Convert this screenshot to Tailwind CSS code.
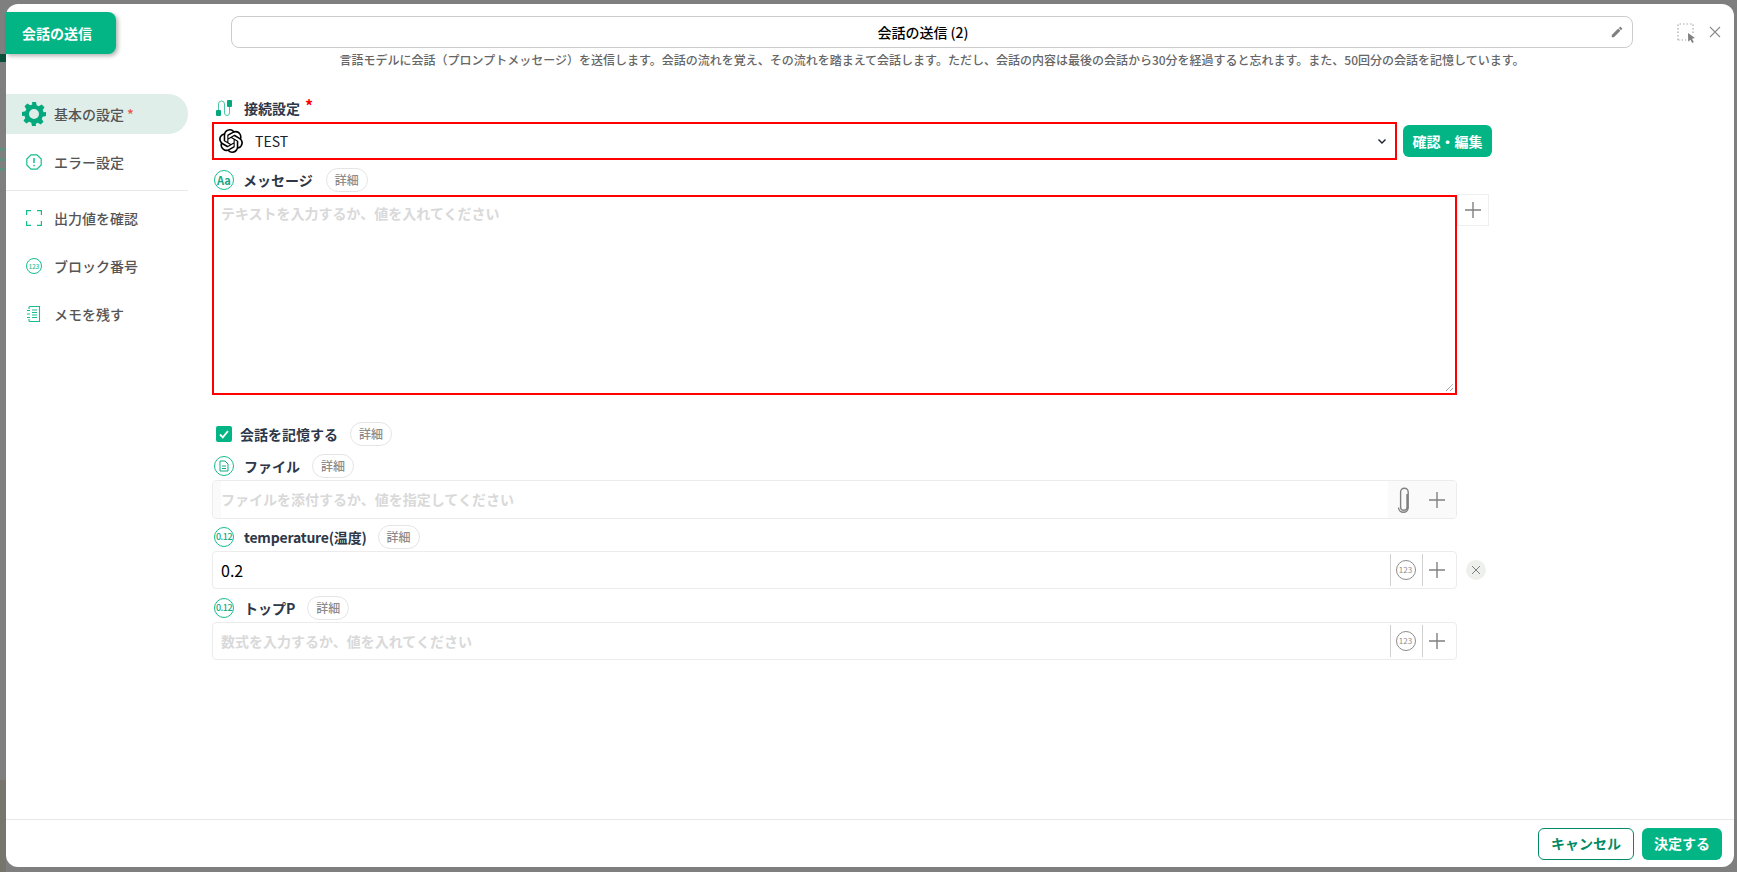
<!DOCTYPE html>
<html lang="ja">
<head>
  <meta charset="UTF-8" />
  <title>会話の送信</title>
  <script src="https://cdn.jsdelivr.net/npm/@tailwindcss/browser@4"></script>
</head>
<body class="relative w-[1737px] h-[872px] overflow-hidden bg-[#7f7f7f] font-['Noto_Sans_CJK_JP',sans-serif]">

  <!-- 背景の切れ端 -->
  <div class="absolute left-0 top-[54px] w-[6px] h-[8px] bg-[#0b4f3d]"></div>
  <div class="absolute left-0 top-[148px] w-[6px] h-[3px] bg-[#5f8f80]"></div>
  <div class="absolute left-0 top-[158px] w-[6px] h-[3px] bg-[#5f8f80]"></div>
  <div class="absolute left-0 top-[168px] w-[6px] h-[3px] bg-[#5f8f80]"></div>
  <div class="absolute left-0 top-[780px] w-[6px] h-[92px] bg-[#78756d]"></div>

  <!-- モーダル -->
  <div class="absolute left-[6px] top-[4px] w-[1728px] h-[863px] flex flex-col rounded-xl bg-white">

    <!-- ヘッダー -->
    <header class="flex h-[90px] shrink-0">
      <div class="mt-[8px] w-[110px] h-[42px] flex items-center justify-center pr-[8px] rounded-r-lg bg-[#03b585] text-white text-[14px] font-bold shadow-[2px_2px_4px_rgba(0,0,0,0.3)]">会話の送信</div>
      <div class="ml-[115px] mt-[12px] w-[1402px]">
        <div class="relative h-[32px] flex items-center justify-center pr-[18px] rounded-lg border border-[#cccccc] text-[14px] font-medium text-black">
          会話の送信 (2)
          <svg class="absolute right-[8px] top-[8px] w-[14px] h-[14px]" viewBox="0 0 24 24" fill="#808080"><path d="M3 17.25V21h3.75L17.81 9.94l-3.75-3.75L3 17.25zM20.71 7.04a1 1 0 0 0 0-1.41l-2.34-2.34a1 1 0 0 0-1.41 0l-1.83 1.83 3.75 3.75 1.83-1.83z"/></svg>
        </div>
        <p class="mt-[2px] text-center text-[12px] leading-[20px] text-[#666666] font-medium whitespace-nowrap">言語モデルに会話（プロンプトメッセージ）を送信します。会話の流れを覚え、その流れを踏まえて会話します。ただし、会話の内容は最後の会話から30分を経過すると忘れます。また、50回分の会話を記憶しています。</p>
      </div>
      <div class="ml-[44px] mt-[19px] flex gap-[12px] h-[20px]">
        <svg class="w-[20px] h-[20px]" viewBox="0 0 20 20" fill="none">
          <path d="M1 17V1h15v9" stroke="#a8a8a8" stroke-width="1.2" stroke-dasharray="1.5 2"/>
          <path d="M1 17h8" stroke="#a8a8a8" stroke-width="1.2" stroke-dasharray="1.5 2"/>
          <path d="M11 10l7 5-3 .8 1.8 3.2-1.6.9-1.8-3.2-2.2 2z" fill="#808080"/>
        </svg>
        <svg class="w-[12px] h-[12px] mt-[3px]" viewBox="0 0 12 12" fill="none" stroke="#8a8a8a" stroke-width="1.1"><path d="M1 1l10 10M11 1L1 11"/></svg>
      </div>
    </header>

    <div class="flex flex-1 min-h-0">
      <!-- サイドバー -->
      <aside class="w-[182px] shrink-0 text-[14px] font-medium text-[#555555]">
        <div class="h-[40px] flex items-center rounded-r-full bg-[#dfeee8] pl-[16px]">
          <svg class="w-[24px] h-[24px]" viewBox="0 0 24 24" fill="#03a97c"><path fill-rule="evenodd" d="M10 0h4l.7 3.3 2.1.9 2.9-1.8 2.8 2.8-1.8 2.9.9 2.1L24 10v4l-3.4.8-.9 2.1 1.8 2.9-2.8 2.8-2.9-1.8-2.1.9L14 24h-4l-.7-3.3-2.1-.9-2.9 1.8-2.8-2.8 1.8-2.9-.9-2.1L0 14v-4l3.4-.7.9-2.1-1.8-2.9 2.8-2.8 2.9 1.8 2.1-.9zM12 7a5 5 0 1 0 0 10 5 5 0 0 0 0-10z"/></svg>
          <span class="ml-[8px]">基本の設定</span><span class="ml-[3px] text-[#e8574e]">*</span>
        </div>
        <div class="mt-[8px] h-[40px] flex items-center pl-[20px]">
          <svg class="w-[16px] h-[16px]" viewBox="0 0 16 16" fill="none" stroke="#14bd90" stroke-width="1.2"><path d="M5 .8h6L15.2 5v6L11 15.2H5L.8 11V5z"/><path d="M8 4v5M8 10.8v1.4" stroke-width="1.5"/></svg>
          <span class="ml-[12px]">エラー設定</span>
        </div>
        <div class="mt-[8px] border-t border-[#e8e8e8]"></div>
        <div class="mt-[3px] h-[48px] flex items-center pl-[20px]">
          <svg class="w-[16px] h-[16px]" viewBox="0 0 16 16" fill="none" stroke="#14bd90" stroke-width="1.2"><path d="M.6 5V.6H5M11 .6h4.4V5M15.4 11v4.4H11M5 15.4H.6V11"/></svg>
          <span class="ml-[12px]">出力値を確認</span>
        </div>
        <div class="h-[48px] flex items-center pl-[20px]">
          <span class="w-[16px] h-[16px] flex items-center justify-center rounded-full border border-[#14bd90] text-[6px] font-medium text-[#14bd90]">123</span>
          <span class="ml-[12px]">ブロック番号</span>
        </div>
        <div class="h-[48px] flex items-center pl-[20px]">
          <svg class="w-[16px] h-[16px]" viewBox="0 0 16 16" fill="none" stroke="#14bd90" stroke-width="1.1"><path d="M3 3V1.5a1 1 0 0 1 1-1h9.5v15H4a1 1 0 0 1-1-1V13"/><path d="M6 4h5M6 6.5h5M6 9h5M6 11.5h5M1 4.5h3M1 8h3M1 11.5h3"/></svg>
          <span class="ml-[12px]">メモを残す</span>
        </div>
      </aside>

      <!-- フォーム -->
      <main class="pl-[24px] text-[14px]">
        <!-- 接続設定 -->
        <div class="mt-[2px] h-[24px] flex items-center text-[#2d3748] font-bold">
          <svg class="ml-[4px] w-[16px] h-[16px]" viewBox="0 0 16 16" fill="none">
            <path d="M2.5 10V4a3 3 0 0 1 6 0v9a2.5 2.5 0 0 0 5 0V7" stroke="#4bc8a5" stroke-width="1"/>
            <rect x="0" y="10" width="5" height="6" rx="1" fill="#03a97c"/><rect x="11" y="0" width="5" height="7" rx="1" fill="#03a97c"/>
          </svg>
          <span class="ml-[12px]">接続設定</span><span class="ml-[5px] -mt-[6px] text-[#ff0000] text-[16px] leading-none">*</span>
        </div>
        <div class="mt-[2px] flex items-center">
          <div class="w-[1185px] h-[38px] flex items-center border-2 border-[#ff0000] px-[5px]">
            <svg class="w-[24px] h-[24px]" viewBox="0 0 24 24" fill="#000000"><path d="M22.2819 9.8211a5.9847 5.9847 0 0 0-.5157-4.9108 6.0462 6.0462 0 0 0-6.5098-2.9A6.0651 6.0651 0 0 0 4.9807 4.1818a5.9847 5.9847 0 0 0-3.9977 2.9 6.0462 6.0462 0 0 0 .7427 7.0966 5.98 5.98 0 0 0 .511 4.9107 6.051 6.051 0 0 0 6.5146 2.9001A5.9847 5.9847 0 0 0 13.2599 24a6.0557 6.0557 0 0 0 5.7718-4.2058 5.9894 5.9894 0 0 0 3.9977-2.9001 6.0557 6.0557 0 0 0-.7475-7.0729zm-9.022 12.6081a4.4755 4.4755 0 0 1-2.8764-1.0408l.1419-.0804 4.7783-2.7582a.7948.7948 0 0 0 .3927-.6813v-6.7369l2.02 1.1686a.071.071 0 0 1 .038.052v5.5826a4.504 4.504 0 0 1-4.4945 4.4944zm-9.6607-4.1254a4.4708 4.4708 0 0 1-.5346-3.0137l.142.0852 4.783 2.7582a.7712.7712 0 0 0 .7806 0l5.8428-3.3685v2.3324a.0804.0804 0 0 1-.0332.0615L9.74 19.9502a4.4992 4.4992 0 0 1-6.1408-1.6464zM2.3408 7.8956a4.485 4.485 0 0 1 2.3655-1.9728V11.6a.7664.7664 0 0 0 .3879.6765l5.8144 3.3543-2.0201 1.1685a.0757.0757 0 0 1-.071 0l-4.8303-2.7865A4.504 4.504 0 0 1 2.3408 7.872zm16.5963 3.8558L13.1038 8.364 15.1192 7.2a.0757.0757 0 0 1 .071 0l4.8303 2.7913a4.4944 4.4944 0 0 1-.6765 8.1042v-5.6772a.79.79 0 0 0-.407-.667zm2.0107-3.0231l-.142-.0852-4.7735-2.7818a.7759.7759 0 0 0-.7854 0L9.409 9.2297V6.8974a.0662.0662 0 0 1 .0284-.0615l4.8303-2.7866a4.4992 4.4992 0 0 1 6.6802 4.66zM8.3065 12.863l-2.02-1.1638a.0804.0804 0 0 1-.038-.0567V6.0742a4.4992 4.4992 0 0 1 7.3757-3.4537l-.142.0805L8.704 5.459a.7948.7948 0 0 0-.3927.6813zm1.0976-2.3654l2.602-1.4998 2.6069 1.4998v2.9994l-2.5974 1.4997-2.6067-1.4997Z"/></svg>
            <span class="ml-[12px] text-[#1a202c]">TEST</span>
            <svg class="ml-auto mr-[3px] w-[10px] h-[10px]" viewBox="0 0 10 10" fill="none" stroke="#1a202c" stroke-width="1.4"><path d="M1.5 3.5L5 7l3.5-3.5"/></svg>
          </div>
          <div class="ml-[6px] w-[89px] h-[32px] flex items-center justify-center rounded-md bg-[#03b585] text-white text-[14px] font-bold whitespace-nowrap">確認・編集</div>
        </div>

        <!-- メッセージ -->
        <div class="mt-[8px] h-[24px] flex items-center text-[#2d3748] font-bold">
          <span class="ml-[2px] w-[20px] h-[20px] flex items-center justify-center rounded-full border-[1.5px] border-[#14bd90] text-[11px] font-bold text-[#14a884]">Aa</span>
          <span class="ml-[9px]">メッセージ</span>
          <span class="ml-[13px] w-[42px] h-[24px] flex items-center justify-center rounded-full border border-[#e5e5e5] text-[12px] font-medium text-[#8c8c8c]">詳細</span>
        </div>
        <div class="mt-[3px] flex items-start">
          <div class="relative w-[1245px] h-[200px] border-2 border-[#ff0000] pl-[7px] pt-[6px] text-[#d9d9d9] font-bold">
            テキストを入力するか、値を入れてください
            <svg class="absolute right-[1px] bottom-[1px] w-[9px] h-[9px]" viewBox="0 0 9 9" fill="none" stroke="#777777" stroke-width="1" stroke-dasharray="1 0.6"><path d="M1 8l7-7M5 8l3-3"/></svg>
          </div>
          <div class="-mt-[1px] w-[32px] h-[32px] flex items-center justify-center border border-[#efefef]">
            <svg class="w-[16px] h-[16px]" viewBox="0 0 16 16" stroke="#808080" stroke-width="1.4"><path d="M8 0v16M0 8h16"/></svg>
          </div>
        </div>

        <!-- 会話を記憶する -->
        <div class="mt-[27px] h-[24px] flex items-center text-[#2d3748] font-bold">
          <span class="ml-[4px] w-[16px] h-[16px] flex items-center justify-center rounded-[2px] bg-[#03b585]">
            <svg class="w-[12px] h-[12px]" viewBox="0 0 12 12" fill="none" stroke="#ffffff" stroke-width="1.8"><path d="M2 6.5l2.8 2.8L10 3"/></svg>
          </span>
          <span class="ml-[8px]">会話を記憶する</span>
          <span class="ml-[12px] w-[42px] h-[24px] flex items-center justify-center rounded-full border border-[#e5e5e5] text-[12px] font-medium text-[#8c8c8c]">詳細</span>
        </div>

        <!-- ファイル -->
        <div class="mt-[8px] h-[24px] flex items-center text-[#2d3748] font-bold">
          <span class="ml-[2px] w-[20px] h-[20px] flex items-center justify-center rounded-full border-[1.5px] border-[#14bd90]">
            <svg class="w-[12px] h-[12px]" viewBox="0 0 12 12" fill="none" stroke="#14a884" stroke-width="1"><path d="M2 1h5l3 3v7H2zM4 6h4M4 8.5h4"/></svg>
          </span>
          <span class="ml-[10px]">ファイル</span>
          <span class="ml-[12px] w-[42px] h-[24px] flex items-center justify-center rounded-full border border-[#e5e5e5] text-[12px] font-medium text-[#8c8c8c]">詳細</span>
        </div>
        <div class="mt-[2px] w-[1245px] h-[39px] flex items-stretch rounded-[4px] border border-[#ececec] overflow-hidden">
          <span class="w-[8px] bg-[#fafafa]"></span>
          <span class="flex-1 self-center text-[#d9d9d9] font-bold">ファイルを添付するか、値を指定してください</span>
          <div class="w-[68px] flex items-center bg-[#fafafa]">
            <svg class="ml-[9px] w-[14px] h-[26px]" viewBox="0 0 14 26" fill="none" stroke="#808080" stroke-width="1.4"><path d="M10 7v13a3.2 3.2 0 0 1-6.4 0V5a3.6 3.6 0 0 1 7.6 0v15.5a4.4 4.4 0 0 1-9.6 0"/></svg>
            <svg class="ml-[18px] w-[16px] h-[16px]" viewBox="0 0 16 16" stroke="#808080" stroke-width="1.4"><path d="M8 0v16M0 8h16"/></svg>
          </div>
        </div>

        <!-- temperature -->
        <div class="mt-[6px] h-[24px] flex items-center text-[#2d3748] font-bold">
          <span class="ml-[2px] w-[20px] h-[20px] flex items-center justify-center rounded-full border-[1.5px] border-[#14bd90] text-[9px] tracking-[-0.5px] font-medium text-[#14a884]">0.12</span>
          <span class="ml-[10px] tracking-[-0.2px]">temperature(温度)</span>
          <span class="ml-[11px] w-[42px] h-[24px] flex items-center justify-center rounded-full border border-[#e5e5e5] text-[12px] font-medium text-[#8c8c8c]">詳細</span>
        </div>
        <div class="mt-[2px] flex items-center">
          <div class="w-[1245px] h-[38px] flex items-center rounded-[4px] border border-[#ececec]">
            <span class="flex-1 pl-[8px] text-[16px] text-black">0.2</span>
            <div class="h-[32px] w-[32px] flex items-center justify-center pr-[2px] border-l border-[#d0d0d0]">
              <span class="w-[20px] h-[20px] flex items-center justify-center rounded-full border border-[#8c8c8c] text-[8px] text-[#8c8c8c]">123</span>
            </div>
            <div class="h-[32px] w-[34px] flex items-center justify-center pr-[5px] border-l border-[#d0d0d0]">
              <svg class="w-[16px] h-[16px]" viewBox="0 0 16 16" stroke="#808080" stroke-width="1.4"><path d="M8 0v16M0 8h16"/></svg>
            </div>
          </div>
          <span class="ml-[9px] w-[20px] h-[20px] flex items-center justify-center rounded-full bg-[#eef0ec]">
            <svg class="w-[10px] h-[10px]" viewBox="0 0 10 10" stroke="#808080" stroke-width="1"><path d="M1 1l8 8M9 1L1 9"/></svg>
          </span>
        </div>

        <!-- トップP -->
        <div class="mt-[7px] h-[24px] flex items-center text-[#2d3748] font-bold">
          <span class="ml-[2px] w-[20px] h-[20px] flex items-center justify-center rounded-full border-[1.5px] border-[#14bd90] text-[9px] tracking-[-0.5px] font-medium text-[#14a884]">0.12</span>
          <span class="ml-[10px]">トップP</span>
          <span class="ml-[12px] w-[42px] h-[24px] flex items-center justify-center rounded-full border border-[#e5e5e5] text-[12px] font-medium text-[#8c8c8c]">詳細</span>
        </div>
        <div class="mt-[2px] w-[1245px] h-[38px] flex items-center rounded-[4px] border border-[#ececec]">
          <span class="flex-1 pl-[8px] text-[#d9d9d9] font-bold">数式を入力するか、値を入れてください</span>
          <div class="h-[32px] w-[32px] flex items-center justify-center pr-[2px] border-l border-[#d0d0d0]">
            <span class="w-[20px] h-[20px] flex items-center justify-center rounded-full border border-[#8c8c8c] text-[8px] text-[#8c8c8c]">123</span>
          </div>
          <div class="h-[32px] w-[34px] flex items-center justify-center pr-[5px] border-l border-[#d0d0d0]">
            <svg class="w-[16px] h-[16px]" viewBox="0 0 16 16" stroke="#808080" stroke-width="1.4"><path d="M8 0v16M0 8h16"/></svg>
          </div>
        </div>
      </main>
    </div>

    <!-- フッター -->
    <footer class="h-[48px] shrink-0 flex items-center justify-end gap-[8px] pr-[12px] border-t border-[#e8e8e8]">
      <div class="w-[96px] h-[32px] flex items-center justify-center rounded-md border border-[#038a65] text-[#038a65] text-[14px] font-bold">キャンセル</div>
      <div class="w-[80px] h-[32px] flex items-center justify-center rounded-md bg-[#03b585] text-white text-[14px] font-bold">決定する</div>
    </footer>
  </div>
</body>
</html>
